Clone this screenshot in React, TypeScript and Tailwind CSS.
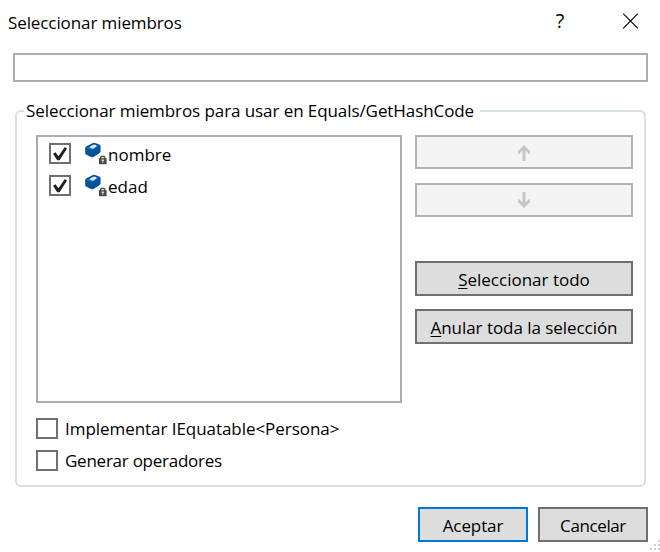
import type { ReactNode } from "react";

function Check({ checked = false }: { checked?: boolean }) {
  return (
    <span className="block h-[21px] w-[22px] shrink-0 border-2 border-[#707070] bg-white">
      {checked && (
        <svg viewBox="0 0 18 17" className="block h-[17px] w-[18px]">
          <path d="M2 8.8 4.6 7.2 7.4 11.2 13.8 2 16 3.6 8.6 15.2 6.2 15.2Z" fill="#212121" />
        </svg>
      )}
    </span>
  );
}

function FieldIcon() {
  return (
    <svg viewBox="0 0 24 24" className="block h-6 w-6 shrink-0">
      <path d="M1.2 6.2Q1.2 5 2.6 4.3L8.4 1.2Q9.8.6 11.2 1L15.4 2.6Q16.6 3 16.6 4.3V9.2Q16.6 10.4 15.4 11.2L9.4 14.9Q8.2 15.6 7 15L2.4 12.8Q1.2 12.2 1.2 11Z" fill="#00539c" />
      <path d="M2.6 6 9.8 2 15.4 3.9 8.2 8.3Z" fill="#1c6bb0" />
      <path d="M5.7 5.6Q6 4.2 7.8 3.6L10 2.8Q12.3 2.7 12.8 4.2L9.4 6.6Q6.8 6.8 5.7 5.6Z" fill="#dbe8f3" />
      <path d="M16.7 17v-1.2q0-1.6 2-1.6t2 1.6V17" fill="none" stroke="#505050" strokeWidth="1.4" />
      <path d="M15 16.2h7.6v6H15Z" fill="#484848" />
      <path d="M17.5 17.6h2.6v1.3h-.8v1.8h-1.1v-1.8h-.7Z" fill="#d5d5d5" />
    </svg>
  );
}

function Button({ children, tone = "normal", className = "" }: { children: ReactNode; tone?: "normal" | "primary" | "disabled"; className?: string }) {
  const tones = {
    normal: "h-[35px] border-[#707070] bg-[#dddddd] pt-[2px]",
    primary: "h-[35px] border-[#0078d7] bg-[#dddddd] pt-[2px]",
    disabled: "h-[34px] border-[#adb2b5] bg-[#f4f4f4]",
  };
  return (
    <button className={`flex shrink-0 items-center justify-center whitespace-nowrap border-2 ${tones[tone]} ${className}`}>
      {children}
    </button>
  );
}

function Arrow({ down = false }: { down?: boolean }) {
  return (
    <svg viewBox="0 0 12 16" className={`h-4 w-3 ${down ? "rotate-180" : "translate-y-px"}`}>
      <path d="M6 0 12 6V9.8L7.5 5.6V16H4.5V5.6L0 9.8V6Z" fill="#c6c6c6" />
    </svg>
  );
}

function ListRow({ name }: { name: string }) {
  return (
    <li className="flex h-8 items-start">
      <Check checked />
      <span className="ml-[13px] -mt-px"><FieldIcon /></span>
      <span>{name}</span>
    </li>
  );
}

export default function App() {
  return (
    <div className="relative flex h-[552px] w-[660px] flex-col overflow-hidden bg-white font-['Open_Sans',sans-serif] text-[17px] leading-6 text-black">
      <header className="flex h-[53px] shrink-0 pl-2">
        <h1 className="mt-[11px] h-6 whitespace-nowrap">
          <span className="tracking-[-0.1px]">Seleccionar miembros</span>
        </h1>
        <span className="ml-auto mr-[56px] mt-[9px] w-3 text-center text-[20px]">?</span>
        <svg viewBox="0 0 16 16" className="mr-[22px] mt-[13px] h-4 w-4">
          <path d="M1.2.7 15.8 15.3M15.8.7 1.2 15.3" stroke="#000" strokeWidth="1.1" />
        </svg>
      </header>
      <div className="ml-[13px] h-[29px] w-[635px] shrink-0 border-2 border-[#abadb3]" />
      <section className="ml-[15px] mt-7 h-[377px] w-[631px] shrink-0 rounded-md border-2 border-[#d5dfe5]">
        <h2 className="-mt-[13px] ml-[7px] h-6 w-[456px] whitespace-nowrap bg-white pl-[2px]">
          <span className="tracking-[-0.08px]">Seleccionar miembros para usar en Equals/GetHashCode</span>
        </h2>
        <div className="ml-[19px] mt-3 flex">
          <ul className="h-[268px] w-[366px] border-2 border-[#abadb3] pl-[11px] pt-[6px]">
            <ListRow name="nombre" />
            <ListRow name="edad" />
          </ul>
          <div className="ml-[13px] flex w-[218px] flex-col">
            <Button tone="disabled"><Arrow /></Button>
            <Button tone="disabled" className="mt-[14px]"><Arrow down /></Button>
            <Button className="mt-11"><span><span className="underline decoration-1 underline-offset-2">S</span>eleccionar todo</span></Button>
            <Button className="mt-[13px]"><span className="tracking-[-0.05px]"><span className="underline decoration-1 underline-offset-2">A</span>nular toda la selección</span></Button>
          </div>
        </div>
        <div className="ml-[19px] mt-[15px] flex flex-col gap-[11px]">
          <label className="flex h-[21px] items-center gap-[7px] whitespace-nowrap"><Check /><span className="tracking-[-0.05px]">Implementar IEquatable&lt;Persona&gt;</span></label>
          <label className="flex h-[21px] items-center gap-[7px] whitespace-nowrap"><Check /><span className="tracking-[-0.25px]">Generar operadores</span></label>
        </div>
      </section>
      <footer className="mt-5 flex justify-end gap-[10px] pr-3">
        <Button tone="primary" className="w-[110px]"><span className="tracking-[-0.1px]">Aceptar</span></Button>
        <Button className="w-[110px]"><span className="tracking-[-0.4px]">Cancelar</span></Button>
      </footer>
      <svg viewBox="0 0 10 12" className="absolute bottom-0 right-0 h-3 w-[10px]" fill="#c9cddc">
        <path d="M8 0h2v2H8zM8 4h2v2H8zM4 4h2v2H4zM8 8h2v2H8zM4 8h2v2H4zM0 8h2v2H0z" />
      </svg>
    </div>
  );
}
